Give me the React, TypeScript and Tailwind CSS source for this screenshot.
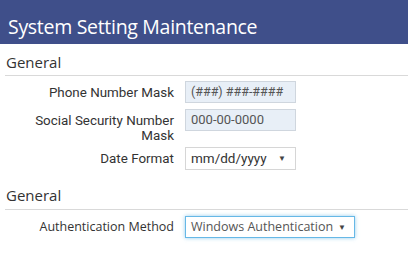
export default function App() {
  return (
    <div className="w-[408px] h-[254px] bg-white overflow-hidden text-[#333]">
      <div className="h-[44px] bg-[#3f4f8a] flex items-end pl-[8px] pb-[4px]">
        <h1 className="text-white text-[19.5px] leading-[26px] font-['Open_Sans',sans-serif] tracking-[-0.3px] whitespace-nowrap">
          System Setting Maintenance
        </h1>
      </div>

      <div className="pl-[5px]">
        <div className="mt-[8px] pb-[3px] border-b border-[#d9d9d9] pl-[1px]">
          <h2 className="text-[15px] leading-[20px] text-[#333] font-['Open_Sans',sans-serif]">General</h2>
        </div>
      </div>

      <div className="font-['Roboto',sans-serif] text-[13.4px] text-[#333]">
        <div className="flex items-center mt-[5px]">
          <div className="w-[174px] text-right leading-[15px] whitespace-nowrap">Phone Number Mask</div>
          <div className="ml-[11px] w-[111px] h-[22px] border border-[#cfd6de] bg-[#e8eff7] px-[5px] flex items-center text-[#555] text-[12.5px] whitespace-nowrap">
            (###) ###-####
          </div>
        </div>

        <div className="flex items-start mt-[6px]">
          <div className="w-[174px] text-right leading-[15px] pt-[4px] pl-[30px]">Social Security Number Mask</div>
          <div className="ml-[11px] w-[111px] h-[22px] border border-[#cfd6de] bg-[#e8eff7] px-[5px] flex items-center text-[#555] text-[13px] whitespace-nowrap">
            000-00-0000
          </div>
        </div>

        <div className="flex items-center mt-[4px]">
          <div className="w-[174px] text-right leading-[15px]">Date Format</div>
          <div className="ml-[11px] w-[111px] h-[23px] border border-[#d6d6d6] bg-white pl-[5px] pr-[9px] flex items-center justify-between text-[#333] text-[13.5px] whitespace-nowrap">
            <span>mm/dd/yyyy</span>
            <span className="text-[8px] text-[#444]">▼</span>
          </div>
        </div>
      </div>

      <div className="pl-[5px]">
        <div className="mt-[15px] pb-[4px] border-b border-[#d9d9d9] pl-[1px]">
          <h2 className="text-[15px] leading-[20px] text-[#333] font-['Open_Sans',sans-serif]">General</h2>
        </div>
      </div>

      <div className="flex items-center mt-[6px] font-['Open_Sans',sans-serif] text-[12.5px]">
        <div className="w-[174px] text-right text-[#333] whitespace-nowrap">Authentication Method</div>
        <div className="ml-[11px] w-[170px] h-[22px] border border-[#66b8e6] shadow-[0_0_4px_rgba(102,184,230,0.7)] bg-white pl-[5px] pr-[8px] flex items-center justify-between text-[#555] text-[12.5px] whitespace-nowrap">
          <span>Windows Authentication</span>
          <span className="text-[8px] text-[#444]">▼</span>
        </div>
      </div>
    </div>
  );
}
